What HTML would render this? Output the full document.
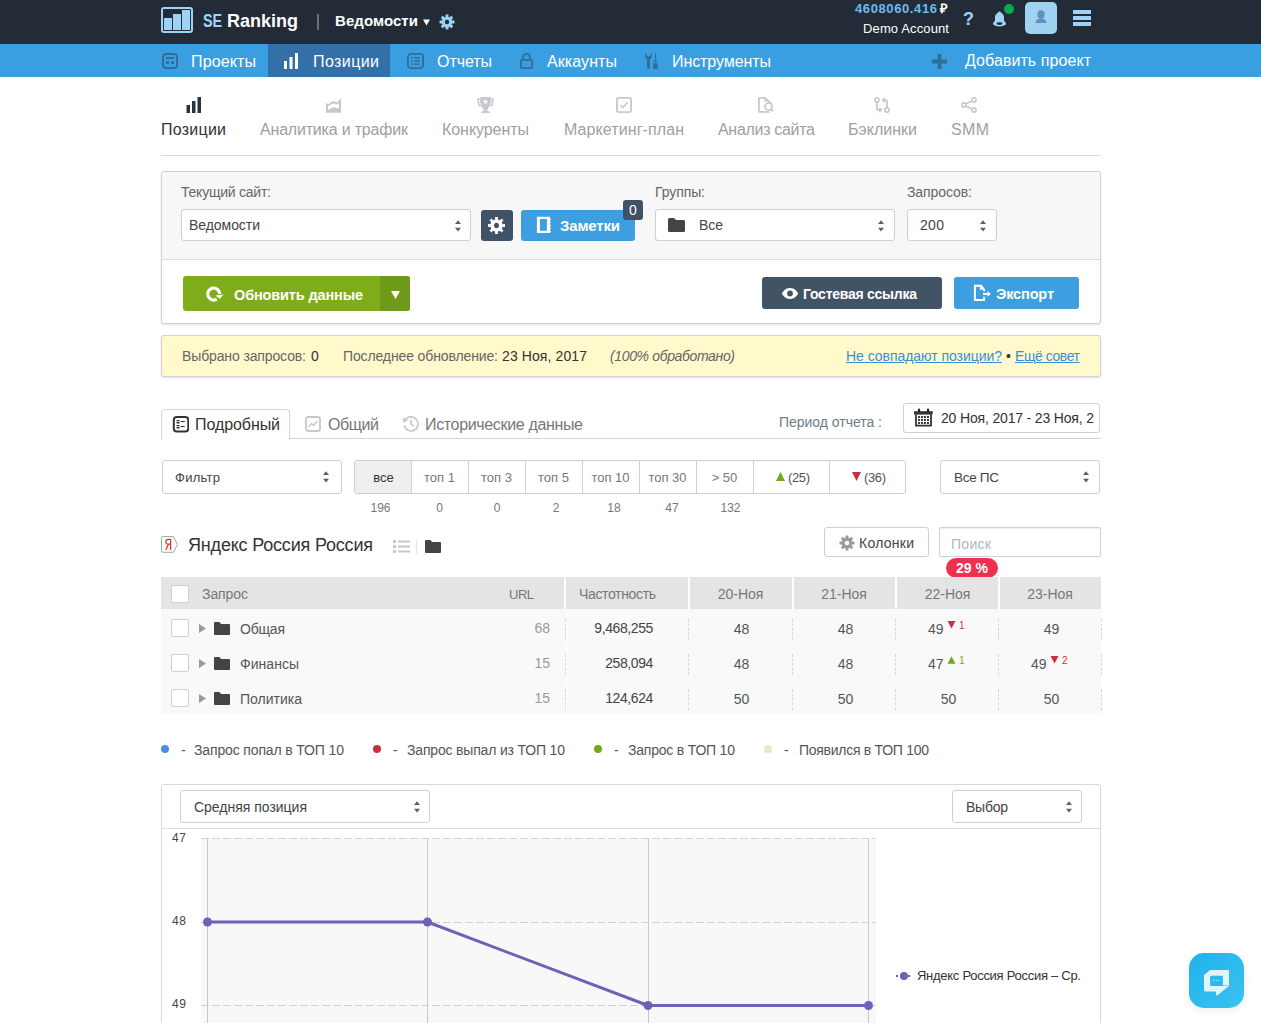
<!DOCTYPE html>
<html><head><meta charset="utf-8"><title>SE Ranking</title><style>
*{margin:0;padding:0;box-sizing:border-box}
html,body{width:1261px;height:1023px;overflow:hidden;background:#fff;position:relative}
body{font-family:"Liberation Sans", sans-serif}
.t{position:absolute;white-space:nowrap;line-height:1}
svg{display:block}
</style></head>
<body>
<div style="position:absolute;left:0px;top:0px;width:1261px;height:44px;background:#232b36"></div>
<div style="position:absolute;left:0px;top:44px;width:1261px;height:33px;background:#3a9fe0"></div>
<div style="position:absolute;left:268px;top:44px;width:122px;height:33px;background:#3370a8"></div>
<div style="position:absolute;left:161px;top:7px;width:32px;height:26px;border:2.5px solid #9fd3f6;border-radius:3px;box-sizing:border-box"></div>
<div style="position:absolute;left:164px;top:18px;width:8px;height:12px;background:#9fd3f6"></div>
<div style="position:absolute;left:173px;top:14px;width:8px;height:16px;background:#9fd3f6"></div>
<div style="position:absolute;left:182px;top:10px;width:8px;height:20px;background:#9fd3f6"></div>
<div style="position:absolute;left:317px;top:14px;width:2px;height:16px;background:#6b7079"></div>
<svg style="position:absolute;left:423px;top:18.5px" width="7" height="7" viewBox="0 0 7 7"><path d="M0 0.5H7L3.5 6.5z" fill="#fff"/></svg>
<svg style="position:absolute;left:439px;top:14px" width="16" height="16" viewBox="0 0 16 16"><g fill="#9fd3f6"><circle cx="8" cy="8" r="5.2"/><rect x="6.5" y="0.5" width="3" height="15" rx="0.5"/><rect x="6.5" y="0.5" width="3" height="15" rx="0.5" transform="rotate(45 8 8)"/><rect x="6.5" y="0.5" width="3" height="15" rx="0.5" transform="rotate(90 8 8)"/><rect x="6.5" y="0.5" width="3" height="15" rx="0.5" transform="rotate(135 8 8)"/></g><circle cx="8" cy="8" r="2.2" fill="#232b36"/></svg>
<svg style="position:absolute;left:992px;top:11px" width="15" height="16" viewBox="0 0 15 16"><path d="M7.5 0.5c-1 0-1.6 0.8-1.8 1.5C3.8 2.8 3 4.5 3 6.5v3L1.5 11.5h12L12 9.5v-3c0-2-0.8-3.7-2.7-4.5C9.1 1.3 8.5 0.5 7.5 0.5z" fill="#9fd3f6"/><ellipse cx="7.5" cy="12.5" rx="6.5" ry="3" fill="#9fd3f6"/><ellipse cx="7.5" cy="12.6" rx="3" ry="1.3" fill="#232b36"/></svg>
<div style="position:absolute;left:1004px;top:4px;width:10px;height:10px;background:#0aa84f;border-radius:50%"></div>
<div style="position:absolute;left:1025px;top:2px;width:32px;height:32px;background:#a0d2f2;border-radius:5px"></div>
<svg style="position:absolute;left:1035px;top:10px" width="12" height="13" viewBox="0 0 12 13"><ellipse cx="6" cy="4.5" rx="3.6" ry="4.2" fill="#5a93bf"/><path d="M0.5 13c0-2.8 2.2-4.6 5.5-4.6s5.5 1.8 5.5 4.6z" fill="#5a93bf"/></svg>
<div style="position:absolute;left:1073px;top:10px;width:18px;height:4px;background:#9fd3f6"></div>
<div style="position:absolute;left:1073px;top:16px;width:18px;height:4px;background:#9fd3f6"></div>
<div style="position:absolute;left:1073px;top:22px;width:18px;height:4px;background:#9fd3f6"></div>
<svg style="position:absolute;left:162px;top:53px" width="16" height="16" viewBox="0 0 16 16"><rect x="1" y="1" width="14" height="14" rx="3" fill="none" stroke="#2f6e99" stroke-width="2"/><rect x="4" y="4" width="8" height="2" fill="#2f6e99"/><rect x="4" y="8" width="3" height="3" fill="#2f6e99"/><rect x="9" y="8" width="3" height="3" fill="#2f6e99"/></svg>
<svg style="position:absolute;left:283px;top:53px" width="16" height="16" viewBox="0 0 16 16"><rect x="1" y="8" width="3" height="8" fill="#fff"/><rect x="6.5" y="4" width="3" height="12" fill="#fff"/><rect x="12" y="0" width="3" height="16" fill="#fff"/></svg>
<svg style="position:absolute;left:407px;top:53px" width="17" height="16" viewBox="0 0 17 16"><rect x="0.9" y="0.9" width="15.2" height="14.2" rx="3" fill="none" stroke="#2f6e99" stroke-width="1.8"/><g fill="#2f6e99"><rect x="4.2" y="4.2" width="1.7" height="1.5"/><rect x="7.2" y="4.2" width="5.6" height="1.5"/><rect x="4.2" y="7.2" width="1.7" height="1.5"/><rect x="7.2" y="7.2" width="5.6" height="1.5"/><rect x="4.2" y="10.3" width="1.7" height="1.5"/><rect x="7.2" y="10.3" width="5.6" height="1.5"/></g></svg>
<svg style="position:absolute;left:520px;top:53px" width="13" height="16" viewBox="0 0 13 16"><path d="M3,6.5 V4.4 A3.5,3.5 0 0 1 10,4.4 V6.5" fill="none" stroke="#2f6e99" stroke-width="1.8"/><rect x="0.9" y="6.9" width="11.2" height="8.2" rx="1" fill="none" stroke="#2f6e99" stroke-width="1.8"/></svg>
<svg style="position:absolute;left:645px;top:53px" width="13" height="16" viewBox="0 0 13 16"><path d="M0,0.5 L1.3,0 V2.5 Q2.2,3.5 3.5,3.5 Q4.8,3.5 5.7,2.5 V0 L7,0.5 V3 Q7,5.5 4.9,6.5 V15 Q4.9,16 3.5,16 Q2.1,16 2.1,15 V6.5 Q0,5.5 0,3 Z" fill="#2f6e99"/><rect x="10" y="0" width="1.1" height="8.2" fill="#2f6e99"/><rect x="8" y="8" width="4.8" height="1" fill="#2f6e99"/><path d="M8.7,10.1 H12.1 L12.8,14.5 Q12.8,16 11.5,16 H9.3 Q8,16 8,14.5 Z" fill="#2f6e99"/></svg>
<svg style="position:absolute;left:932px;top:54px" width="15" height="15" viewBox="0 0 15 15"><rect x="5.5" y="0" width="4" height="15" fill="#2f6e99"/><rect x="0" y="5.5" width="15" height="4" fill="#2f6e99"/></svg>
<svg style="position:absolute;left:186px;top:97px" width="16" height="16" viewBox="0 0 16 16"><rect x="0.5" y="8" width="3.5" height="8" fill="#263240"/><rect x="6" y="4" width="3.5" height="12" fill="#263240"/><rect x="11.5" y="0" width="3.5" height="16" fill="#263240"/></svg>
<svg style="position:absolute;left:326px;top:98px" width="15" height="15" viewBox="0 0 15 15"><path d="M0,5.2 L2.5,6 L6.5,3 L11,4.5 L15,0 V14.8 H0 Z" fill="#c5c9cc"/><path d="M2,8 L7,5.5 L11.5,6.5 L13,4.5 V10 L11.5,10.5 L7.5,9 L2,12 Z" fill="#fff"/></svg>
<svg style="position:absolute;left:477px;top:97px" width="17" height="16" viewBox="0 0 17 16"><path d="M3.2,0 H13.9 V5.5 L10,13.8 H7 L3.2,5.5 Z" fill="#c5c9cc"/><path d="M3.8,16 Q4.3,13.8 8.5,13.5 Q12.7,13.8 13.2,16 Z" fill="#c5c9cc"/><path d="M3.4,2.2 H0.8 L2.1,8.5 H5 M13.7,2.2 H16.2 L14.9,8.5 H12" fill="none" stroke="#c5c9cc" stroke-width="1.5"/><path d="M8.5,2 L9.3,3.7 L11.1,3.9 L9.8,5.1 L10.1,6.9 L8.5,6 L6.9,6.9 L7.2,5.1 L5.9,3.9 L7.7,3.7 Z" fill="#fff"/></svg>
<svg style="position:absolute;left:616px;top:97px" width="16" height="16" viewBox="0 0 16 16"><rect x="0.9" y="0.9" width="14.2" height="14.2" rx="1.5" fill="none" stroke="#c5c9cc" stroke-width="1.8"/><path d="M4.2,8.2 L6.9,10.5 L11.6,5.4" fill="none" stroke="#c5c9cc" stroke-width="1.6"/></svg>
<svg style="position:absolute;left:758px;top:97px" width="16" height="16" viewBox="0 0 16 16"><path d="M6.5,14.9 H1.5 Q0.9,14.9 0.9,14.3 V1.5 Q0.9,0.9 1.5,0.9 H7 L13.6,6.8" fill="none" stroke="#c5c9cc" stroke-width="1.8"/><path d="M6.3,0.9 V4.6 H10.2 Z" fill="#c5c9cc"/><path d="M11.5,15 H6.5" stroke="#c5c9cc" stroke-width="1.8"/><circle cx="10.5" cy="9.5" r="3.5" fill="#fff" stroke="#c5c9cc" stroke-width="1.7"/><path d="M12.8,12 L15,14.2" stroke="#c5c9cc" stroke-width="2"/></svg>
<svg style="position:absolute;left:874px;top:97px" width="16" height="16" viewBox="0 0 16 16"><circle cx="2.9" cy="2.9" r="2.1" fill="none" stroke="#c5c9cc" stroke-width="1.6"/><circle cx="13" cy="13" r="2.1" fill="none" stroke="#c5c9cc" stroke-width="1.6"/><path d="M2.9,5 V11.5 Q2.9,12.8 4.2,12.8 H6.5 M13,11 V4.5 Q13,3.2 11.7,3.2 H9.5" fill="none" stroke="#c5c9cc" stroke-width="1.8"/><path d="M5.2,10 L8.8,12.8 L5.2,15.8 Z M10.8,0.1 L7.2,3.1 L10.8,6 Z" fill="#c5c9cc"/></svg>
<svg style="position:absolute;left:961px;top:97px" width="16" height="16" viewBox="0 0 16 16"><circle cx="13" cy="2.9" r="2.1" fill="none" stroke="#c5c9cc" stroke-width="1.6"/><circle cx="2.9" cy="8" r="2.1" fill="none" stroke="#c5c9cc" stroke-width="1.6"/><circle cx="13" cy="13" r="2.1" fill="none" stroke="#c5c9cc" stroke-width="1.6"/><path d="M4.8,7 L11.1,3.9 M4.8,9 L11.1,12.1" stroke="#c5c9cc" stroke-width="1.5"/></svg>
<div style="position:absolute;left:161px;top:155px;width:940px;height:1px;background:#d8d8d8"></div>
<div style="position:absolute;left:161px;top:171px;width:940px;height:153px;border:1px solid #d0d0d0;border-radius:3px;background:#fff;box-shadow:0 1px 2px rgba(0,0,0,0.12)"></div>
<div style="position:absolute;left:162px;top:172px;width:938px;height:88px;background:#f7f7f7;border-bottom:1px solid #dcdcdc;border-radius:3px 3px 0 0"></div>
<div style="position:absolute;left:181px;top:209px;width:290px;height:32px;background:#fff;border:1px solid #cfcfcf;border-radius:3px"></div>
<svg style="position:absolute;left:455px;top:220px" width="7" height="12" viewBox="0 0 7 12"><path d="M0,4 L3,0.3 L6,4z M0,7.8 H6 L3,11.5z" fill="#606060"/></svg>
<div style="position:absolute;left:481px;top:210px;width:32px;height:31px;background:#425266;border-radius:3px"></div>
<svg style="position:absolute;left:488px;top:216.5px" width="17" height="17" viewBox="0 0 17 17"><g fill="#fff"><circle cx="8.5" cy="8.5" r="6.2"/><path d="M7,0 H10 L9.7,3 H7.3z M7,17 H10 L9.7,14 H7.3z M0,7 V10 L3,9.7 V7.3z M17,7 V10 L14,9.7 V7.3z"/><path d="M7,0 H10 L9.7,3 H7.3z M7,17 H10 L9.7,14 H7.3z M0,7 V10 L3,9.7 V7.3z M17,7 V10 L14,9.7 V7.3z" transform="rotate(45 8.5 8.5)"/></g><ellipse cx="8.5" cy="8.5" rx="2.4" ry="2.8" fill="#425266"/></svg>
<div style="position:absolute;left:521px;top:210px;width:114px;height:31px;background:#3d9fe0;border-radius:3px"></div>
<svg style="position:absolute;left:536px;top:216px" width="16" height="18" viewBox="0 0 16 18"><path d="M0.9,0.8 H14.1 V16.9 H0.9 Z M3.9,3.1 V14.8 H10.9 V3.1 Z" fill="#fff" fill-rule="evenodd"/><path d="M14,2.6 L15.3,3.4 L14,4.2Z M14,5.7 L15.3,6.5 L14,7.3Z M14,8.7 L15.3,9.5 L14,10.3Z M14,11.7 L15.3,12.5 L14,13.3Z M14,14.8 L15.3,15.6 L14,16.4Z" fill="#fff"/></svg>
<div style="position:absolute;left:623px;top:200px;width:20px;height:20px;background:#425266;border-radius:3px"></div>
<div style="position:absolute;left:655px;top:209px;width:240px;height:32px;background:#fff;border:1px solid #cfcfcf;border-radius:3px"></div>
<svg style="position:absolute;left:668px;top:218px" width="17" height="14" viewBox="0 0 17 14"><path d="M0 1.5Q0 0 1.5 0H6l2 2h7.5Q17 2 17 3.5v9Q17 14 15.5 14h-14Q0 14 0 12.5z" fill="#444"/></svg>
<svg style="position:absolute;left:878px;top:220px" width="7" height="12" viewBox="0 0 7 12"><path d="M0,4 L3,0.3 L6,4z M0,7.8 H6 L3,11.5z" fill="#606060"/></svg>
<div style="position:absolute;left:907px;top:209px;width:90px;height:32px;background:#fff;border:1px solid #cfcfcf;border-radius:3px"></div>
<svg style="position:absolute;left:980px;top:220px" width="7" height="12" viewBox="0 0 7 12"><path d="M0,4 L3,0.3 L6,4z M0,7.8 H6 L3,11.5z" fill="#606060"/></svg>
<div style="position:absolute;left:183px;top:276px;width:227px;height:35px;background:#7fad19;border-radius:3px"></div>
<div style="position:absolute;left:380px;top:276px;width:30px;height:35px;background:#6e9a1c;border-radius:0 3px 3px 0"></div>
<svg style="position:absolute;left:205px;top:285px" width="20" height="18" viewBox="0 0 20 18"><path d="M14.7,9 A6,6 0 1 0 11.7,14.2" fill="none" stroke="#fff" stroke-width="3.2"/><path d="M10.3,10.5 L18.7,9.5 L14.8,13.8 Z" fill="#fff"/></svg>
<svg style="position:absolute;left:391px;top:291px" width="9" height="8" viewBox="0 0 9 8"><path d="M0 0H9L4.5 8z" fill="#fff"/></svg>
<div style="position:absolute;left:762px;top:277px;width:180px;height:32px;background:#435366;border-radius:3px"></div>
<svg style="position:absolute;left:781px;top:287px" width="18" height="13" viewBox="0 0 18 13"><path d="M0.8,6.4 C3,2.5 5.8,0.9 9,0.9 C12.2,0.9 15,2.5 17.2,6.4 C15,10.3 12.2,11.9 9,11.9 C5.8,11.9 3,10.3 0.8,6.4 Z" fill="#fff"/><circle cx="9" cy="6.4" r="2.9" fill="#435366"/></svg>
<div style="position:absolute;left:954px;top:277px;width:125px;height:32px;background:#3d9fe0;border-radius:3px"></div>
<svg style="position:absolute;left:973px;top:284px" width="19" height="18" viewBox="0 0 19 18"><path d="M11.1,7.2 V5.5 L8,1.8 H1.9 V15.9 H11.1 V12.8" fill="none" stroke="#fff" stroke-width="2"/><path d="M6.9,1.8 V5.8 H11.1 Z" fill="#fff"/><rect x="10" y="9" width="4.5" height="2" fill="#fff"/><path d="M14.3,7 L17.9,9.9 L14.3,12.8 Z" fill="#fff"/></svg>
<div style="position:absolute;left:161px;top:335px;width:940px;height:42px;background:#fff9cc;border:1px solid #d2d2d2;border-radius:3px;box-shadow:0 1px 2px rgba(0,0,0,0.12)"></div>
<div style="position:absolute;left:161px;top:409px;width:129px;height:31px;border:1px solid #d5d5d5;border-bottom:none;border-radius:4px 4px 0 0;background:#fff"></div>
<div style="position:absolute;left:161px;top:438px;width:940px;height:1px;background:#d5d5d5"></div>
<div style="position:absolute;left:162px;top:438px;width:127px;height:1px;background:#fff"></div>
<svg style="position:absolute;left:172px;top:416px" width="17" height="17" viewBox="0 0 17 17"><rect x="1.8" y="1" width="14.5" height="14.5" rx="3" fill="none" stroke="#333" stroke-width="2"/><g fill="#333"><rect x="4.4" y="4" width="3.3" height="1.3" rx="0.6"/><rect x="4.4" y="6.1" width="3.3" height="1.3" rx="0.6"/><rect x="4.4" y="9" width="3.3" height="1.3" rx="0.6"/><rect x="4.4" y="11.1" width="3.3" height="1.3" rx="0.6"/><rect x="8.7" y="5" width="4" height="1.1"/><rect x="8.7" y="10" width="4" height="1.1"/></g></svg>
<svg style="position:absolute;left:305px;top:416px" width="16" height="16" viewBox="0 0 16 16"><rect x="1" y="1" width="14" height="14" rx="2" fill="none" stroke="#c8c8c8" stroke-width="1.8"/><path d="M3.5 11l3-3.5 2 2 4-4.5" fill="none" stroke="#c8c8c8" stroke-width="1.3"/></svg>
<svg style="position:absolute;left:403px;top:416px" width="17" height="17" viewBox="0 0 17 17"><path d="M2.19,4 A7,7 0 1 1 1.19,9.5" fill="none" stroke="#c8c8c8" stroke-width="1.8"/><path d="M0.1,1.6 L0.1,6.7 L4.9,4.4 Z" fill="#c8c8c8"/><path d="M8,3.9 V7.7 L10.8,10.5" fill="none" stroke="#c8c8c8" stroke-width="1.6"/></svg>
<div style="position:absolute;left:903px;top:403px;width:197px;height:30px;border:1px solid #d0d0d0;border-radius:3px;background:#fff"></div>
<svg style="position:absolute;left:914px;top:408px" width="19" height="19" viewBox="0 0 19 19"><rect x="0" y="3.2" width="18.7" height="3.4" fill="#333"/><rect x="4" y="0.7" width="2.1" height="3.3" fill="#222"/><rect x="13" y="0.7" width="2.1" height="3.3" fill="#222"/><path d="M2,6.5 V17.7 H17 V6.5" fill="none" stroke="#333" stroke-width="1.8"/><g fill="#111"><rect x="4.1" y="8.1" width="1.8" height="1.8"/><rect x="7.1" y="8.1" width="1.8" height="1.8"/><rect x="10" y="8.1" width="1.8" height="1.8"/><rect x="13.1" y="8.1" width="1.8" height="1.8"/><rect x="4.1" y="11" width="1.8" height="1.8"/><rect x="7.1" y="11" width="1.8" height="1.8"/><rect x="10" y="11" width="1.8" height="1.8"/><rect x="13.1" y="11" width="1.8" height="1.8"/><rect x="4.1" y="14.1" width="1.8" height="1.8"/><rect x="7.1" y="14.1" width="1.8" height="1.8"/><rect x="10" y="14.1" width="1.8" height="1.8"/><rect x="13.1" y="14.1" width="1.8" height="1.8"/></g></svg>
<div style="position:absolute;left:162px;top:460px;width:180px;height:34px;border:1px solid #cfcfcf;border-radius:3px;background:#fff"></div>
<svg style="position:absolute;left:323px;top:471px" width="7" height="12" viewBox="0 0 7 12"><path d="M0,4 L3,0.3 L6,4z M0,7.8 H6 L3,11.5z" fill="#606060"/></svg>
<div style="position:absolute;left:354px;top:460px;width:552px;height:34px;border:1px solid #cfcfcf;border-radius:3px;background:#fff"></div>
<div style="position:absolute;left:355px;top:461px;width:57px;height:32px;background:#efefef;border-radius:2px 0 0 2px"></div>
<div style="position:absolute;left:411px;top:461px;width:1px;height:32px;background:#d0d0d0"></div>
<div style="position:absolute;left:468px;top:461px;width:1px;height:32px;background:#d0d0d0"></div>
<div style="position:absolute;left:525px;top:461px;width:1px;height:32px;background:#d0d0d0"></div>
<div style="position:absolute;left:582px;top:461px;width:1px;height:32px;background:#d0d0d0"></div>
<div style="position:absolute;left:639px;top:461px;width:1px;height:32px;background:#d0d0d0"></div>
<div style="position:absolute;left:696px;top:461px;width:1px;height:32px;background:#d0d0d0"></div>
<div style="position:absolute;left:753px;top:461px;width:1px;height:32px;background:#d0d0d0"></div>
<div style="position:absolute;left:829px;top:461px;width:1px;height:32px;background:#d0d0d0"></div>
<div style="position:absolute;left:353.5px;top:468px;width:60px;text-align:center;font-size:13px;line-height:20px;color:#333;white-space:nowrap">все</div>
<div style="position:absolute;left:409.5px;top:468px;width:60px;text-align:center;font-size:13px;line-height:20px;color:#777;white-space:nowrap">топ 1</div>
<div style="position:absolute;left:466.5px;top:468px;width:60px;text-align:center;font-size:13px;line-height:20px;color:#777;white-space:nowrap">топ 3</div>
<div style="position:absolute;left:523.5px;top:468px;width:60px;text-align:center;font-size:13px;line-height:20px;color:#777;white-space:nowrap">топ 5</div>
<div style="position:absolute;left:580.5px;top:468px;width:60px;text-align:center;font-size:13px;line-height:20px;color:#777;white-space:nowrap">топ 10</div>
<div style="position:absolute;left:637.5px;top:468px;width:60px;text-align:center;font-size:13px;line-height:20px;color:#777;white-space:nowrap">топ 30</div>
<div style="position:absolute;left:694.5px;top:468px;width:60px;text-align:center;font-size:13px;line-height:20px;color:#777;white-space:nowrap">> 50</div>
<svg style="position:absolute;left:776px;top:472px" width="9" height="9" viewBox="0 0 9 9"><path d="M4.5 0L9 9H0z" fill="#73a81c"/></svg>
<svg style="position:absolute;left:852px;top:472px" width="9" height="9" viewBox="0 0 9 9"><path d="M0 0H9L4.5 9z" fill="#c9303e"/></svg>
<div style="position:absolute;left:350.5px;top:500px;width:60px;text-align:center;font-size:12px;line-height:16px;color:#777;white-space:nowrap">196</div>
<div style="position:absolute;left:409.5px;top:500px;width:60px;text-align:center;font-size:12px;line-height:16px;color:#777;white-space:nowrap">0</div>
<div style="position:absolute;left:467px;top:500px;width:60px;text-align:center;font-size:12px;line-height:16px;color:#777;white-space:nowrap">0</div>
<div style="position:absolute;left:526px;top:500px;width:60px;text-align:center;font-size:12px;line-height:16px;color:#777;white-space:nowrap">2</div>
<div style="position:absolute;left:584px;top:500px;width:60px;text-align:center;font-size:12px;line-height:16px;color:#777;white-space:nowrap">18</div>
<div style="position:absolute;left:642px;top:500px;width:60px;text-align:center;font-size:12px;line-height:16px;color:#777;white-space:nowrap">47</div>
<div style="position:absolute;left:700.5px;top:500px;width:60px;text-align:center;font-size:12px;line-height:16px;color:#777;white-space:nowrap">132</div>
<div style="position:absolute;left:940px;top:460px;width:160px;height:34px;border:1px solid #cfcfcf;border-radius:3px;background:#fff"></div>
<svg style="position:absolute;left:1083px;top:471px" width="7" height="12" viewBox="0 0 7 12"><path d="M0,4 L3,0.3 L6,4z M0,7.8 H6 L3,11.5z" fill="#606060"/></svg>
<svg style="position:absolute;left:161px;top:536px" width="18" height="17" viewBox="0 0 18 17"><path d="M2,0.5 H12.3 L16.5,8.4 L12.3,16.3 H2 Q0.5,16.3 0.5,14.8 V2 Q0.5,0.5 2,0.5 Z" fill="#fff" stroke="#a8a8a8" stroke-width="1"/><path d="M9.6,2.8 V13.9 M9.6,3.3 H7.4 Q4.8,3.3 4.8,5.8 Q4.8,8.2 7.4,8.2 H9.6 M7.4,8.2 L4.8,13.9" fill="none" stroke="#e0301e" stroke-width="1.2"/></svg>
<svg style="position:absolute;left:393px;top:540px" width="17" height="13" viewBox="0 0 17 13"><g fill="#c8c8c8"><rect x="0" y="0" width="3" height="3"/><rect x="5" y="0.5" width="12" height="2"/><rect x="0" y="5" width="3" height="3"/><rect x="5" y="5.5" width="12" height="2"/><rect x="0" y="10" width="3" height="3"/><rect x="5" y="10.5" width="12" height="2"/></g></svg>
<div style="position:absolute;left:416px;top:540px;width:1px;height:14px;background:#e5e5e5"></div>
<svg style="position:absolute;left:425px;top:540px" width="16" height="13" viewBox="0 0 16 13"><path d="M0 1Q0 0 1 0H5.5l1.5 2h8Q16 2 16 3v9Q16 13 15 13H1Q0 13 0 12z" fill="#444"/></svg>
<div style="position:absolute;left:824px;top:527px;width:105px;height:30px;border:1px solid #cfcfcf;border-radius:3px;background:#fff"></div>
<svg style="position:absolute;left:839px;top:535px" width="16" height="16" viewBox="0 0 16 16"><g fill="#999"><circle cx="8" cy="8" r="5.2"/><rect x="6.5" y="0.5" width="3" height="15" rx="0.5"/><rect x="6.5" y="0.5" width="3" height="15" rx="0.5" transform="rotate(45 8 8)"/><rect x="6.5" y="0.5" width="3" height="15" rx="0.5" transform="rotate(90 8 8)"/><rect x="6.5" y="0.5" width="3" height="15" rx="0.5" transform="rotate(135 8 8)"/></g><circle cx="8" cy="8" r="2.3" fill="#fff"/></svg>
<div style="position:absolute;left:939px;top:527px;width:162px;height:30px;border:1px solid #cfcfcf;border-radius:2px;background:#fff;box-shadow:inset 0 1px 1px rgba(0,0,0,0.06)"></div>
<div style="position:absolute;left:946px;top:558px;width:52px;height:20px;background:#f0304e;border-radius:10px"></div>
<div style="position:absolute;left:161px;top:577px;width:940px;height:32px;background:#e4e4e4"></div>
<div style="position:absolute;left:564px;top:577px;width:2px;height:32px;background:#fff"></div>
<div style="position:absolute;left:688px;top:577px;width:2px;height:32px;background:#fff"></div>
<div style="position:absolute;left:792px;top:577px;width:2px;height:32px;background:#fff"></div>
<div style="position:absolute;left:895px;top:577px;width:2px;height:32px;background:#fff"></div>
<div style="position:absolute;left:998px;top:577px;width:2px;height:32px;background:#fff"></div>
<div style="position:absolute;left:161px;top:609px;width:940px;height:105px;background:#f9f9f9"></div>
<div style="position:absolute;left:566px;top:609px;width:1px;height:105px;background:#fff"></div>
<div style="position:absolute;left:171px;top:585px;width:18px;height:18px;background:#fff;border:1px solid #d0d0d0;border-radius:2px"></div>
<div style="position:absolute;left:700.5px;top:586px;width:80px;text-align:center;font-size:14px;line-height:16px;color:#777;white-space:nowrap">20-Ноя</div>
<div style="position:absolute;left:804px;top:586px;width:80px;text-align:center;font-size:14px;line-height:16px;color:#777;white-space:nowrap">21-Ноя</div>
<div style="position:absolute;left:907.5px;top:586px;width:80px;text-align:center;font-size:14px;line-height:16px;color:#777;white-space:nowrap">22-Ноя</div>
<div style="position:absolute;left:1010px;top:586px;width:80px;text-align:center;font-size:14px;line-height:16px;color:#777;white-space:nowrap">23-Ноя</div>
<div style="position:absolute;left:171px;top:619px;width:18px;height:18px;background:#fff;border:1px solid #d0d0d0;border-radius:2px"></div>
<svg style="position:absolute;left:199px;top:624px" width="7" height="9" viewBox="0 0 7 9"><path d="M0 0L7 4.5 0 9z" fill="#999"/></svg>
<svg style="position:absolute;left:214px;top:622px" width="16" height="13" viewBox="0 0 16 13"><path d="M0 1Q0 0 1 0H5.5l1.5 2h8Q16 2 16 3v9Q16 13 15 13H1Q0 13 0 12z" fill="#444"/></svg>
<div style="position:absolute;left:500px;top:620px;width:50px;text-align:right;font-size:14px;line-height:16px;color:#999">68</div>
<div style="position:absolute;left:560px;top:620px;width:93px;text-align:right;font-size:14px;line-height:16px;color:#444;letter-spacing:-0.4px">9,468,255</div>
<div style="position:absolute;left:565px;top:619px;width:0;height:21px;border-left:1px dashed #d8d8d8"></div>
<div style="position:absolute;left:688px;top:619px;width:0;height:21px;border-left:1px dashed #d8d8d8"></div>
<div style="position:absolute;left:792px;top:619px;width:0;height:21px;border-left:1px dashed #d8d8d8"></div>
<div style="position:absolute;left:895px;top:619px;width:0;height:21px;border-left:1px dashed #d8d8d8"></div>
<div style="position:absolute;left:998px;top:619px;width:0;height:21px;border-left:1px dashed #d8d8d8"></div>
<div style="position:absolute;left:1101px;top:619px;width:0;height:21px;border-left:1px dashed #d8d8d8"></div>
<div class="v" style="position:absolute;left:711.5px;top:621px;width:60px;text-align:center;font-size:14px;line-height:16px;color:#555">48</div>
<div class="v" style="position:absolute;left:815.5px;top:621px;width:60px;text-align:center;font-size:14px;line-height:16px;color:#555">48</div>
<div class="v" style="position:absolute;left:918.5px;top:621px;width:60px;text-align:center;font-size:14px;line-height:16px;color:#555"></div>
<div class="v" style="position:absolute;left:1021.5px;top:621px;width:60px;text-align:center;font-size:14px;line-height:16px;color:#555">49</div>
<div style="position:absolute;left:171px;top:654px;width:18px;height:18px;background:#fff;border:1px solid #d0d0d0;border-radius:2px"></div>
<svg style="position:absolute;left:199px;top:659px" width="7" height="9" viewBox="0 0 7 9"><path d="M0 0L7 4.5 0 9z" fill="#999"/></svg>
<svg style="position:absolute;left:214px;top:657px" width="16" height="13" viewBox="0 0 16 13"><path d="M0 1Q0 0 1 0H5.5l1.5 2h8Q16 2 16 3v9Q16 13 15 13H1Q0 13 0 12z" fill="#444"/></svg>
<div style="position:absolute;left:500px;top:655px;width:50px;text-align:right;font-size:14px;line-height:16px;color:#999">15</div>
<div style="position:absolute;left:560px;top:655px;width:93px;text-align:right;font-size:14px;line-height:16px;color:#444;letter-spacing:-0.4px">258,094</div>
<div style="position:absolute;left:565px;top:654px;width:0;height:21px;border-left:1px dashed #d8d8d8"></div>
<div style="position:absolute;left:688px;top:654px;width:0;height:21px;border-left:1px dashed #d8d8d8"></div>
<div style="position:absolute;left:792px;top:654px;width:0;height:21px;border-left:1px dashed #d8d8d8"></div>
<div style="position:absolute;left:895px;top:654px;width:0;height:21px;border-left:1px dashed #d8d8d8"></div>
<div style="position:absolute;left:998px;top:654px;width:0;height:21px;border-left:1px dashed #d8d8d8"></div>
<div style="position:absolute;left:1101px;top:654px;width:0;height:21px;border-left:1px dashed #d8d8d8"></div>
<div class="v" style="position:absolute;left:711.5px;top:656px;width:60px;text-align:center;font-size:14px;line-height:16px;color:#555">48</div>
<div class="v" style="position:absolute;left:815.5px;top:656px;width:60px;text-align:center;font-size:14px;line-height:16px;color:#555">48</div>
<div class="v" style="position:absolute;left:918.5px;top:656px;width:60px;text-align:center;font-size:14px;line-height:16px;color:#555"></div>
<div class="v" style="position:absolute;left:1021.5px;top:656px;width:60px;text-align:center;font-size:14px;line-height:16px;color:#555"></div>
<div style="position:absolute;left:171px;top:689px;width:18px;height:18px;background:#fff;border:1px solid #d0d0d0;border-radius:2px"></div>
<svg style="position:absolute;left:199px;top:694px" width="7" height="9" viewBox="0 0 7 9"><path d="M0 0L7 4.5 0 9z" fill="#999"/></svg>
<svg style="position:absolute;left:214px;top:692px" width="16" height="13" viewBox="0 0 16 13"><path d="M0 1Q0 0 1 0H5.5l1.5 2h8Q16 2 16 3v9Q16 13 15 13H1Q0 13 0 12z" fill="#444"/></svg>
<div style="position:absolute;left:500px;top:690px;width:50px;text-align:right;font-size:14px;line-height:16px;color:#999">15</div>
<div style="position:absolute;left:560px;top:690px;width:93px;text-align:right;font-size:14px;line-height:16px;color:#444;letter-spacing:-0.4px">124,624</div>
<div style="position:absolute;left:565px;top:689px;width:0;height:21px;border-left:1px dashed #d8d8d8"></div>
<div style="position:absolute;left:688px;top:689px;width:0;height:21px;border-left:1px dashed #d8d8d8"></div>
<div style="position:absolute;left:792px;top:689px;width:0;height:21px;border-left:1px dashed #d8d8d8"></div>
<div style="position:absolute;left:895px;top:689px;width:0;height:21px;border-left:1px dashed #d8d8d8"></div>
<div style="position:absolute;left:998px;top:689px;width:0;height:21px;border-left:1px dashed #d8d8d8"></div>
<div style="position:absolute;left:1101px;top:689px;width:0;height:21px;border-left:1px dashed #d8d8d8"></div>
<div class="v" style="position:absolute;left:711.5px;top:691px;width:60px;text-align:center;font-size:14px;line-height:16px;color:#555">50</div>
<div class="v" style="position:absolute;left:815.5px;top:691px;width:60px;text-align:center;font-size:14px;line-height:16px;color:#555">50</div>
<div class="v" style="position:absolute;left:918.5px;top:691px;width:60px;text-align:center;font-size:14px;line-height:16px;color:#555">50</div>
<div class="v" style="position:absolute;left:1021.5px;top:691px;width:60px;text-align:center;font-size:14px;line-height:16px;color:#555">50</div>
<div style="position:absolute;left:928px;top:621px;font-size:14px;line-height:16px;color:#555;white-space:nowrap">49</div>
<svg style="position:absolute;left:947px;top:621px" width="9" height="8" viewBox="0 0 9 8"><path d="M0.5 0H8.5L4.5 7.5z" fill="#c9303e"/></svg>
<div style="position:absolute;left:959px;top:620px;font-size:10px;line-height:11px;color:#c9303e;white-space:nowrap">1</div>
<div style="position:absolute;left:928px;top:656px;font-size:14px;line-height:16px;color:#555;white-space:nowrap">47</div>
<svg style="position:absolute;left:947px;top:656px" width="9" height="8" viewBox="0 0 9 8"><path d="M4.5 0.3L8.5 7.8H0.5z" fill="#73a81c"/></svg>
<div style="position:absolute;left:959px;top:655px;font-size:10px;line-height:11px;color:#73a81c;white-space:nowrap">1</div>
<div style="position:absolute;left:1031px;top:656px;font-size:14px;line-height:16px;color:#555;white-space:nowrap">49</div>
<svg style="position:absolute;left:1050px;top:656px" width="9" height="8" viewBox="0 0 9 8"><path d="M0.5 0H8.5L4.5 7.5z" fill="#c9303e"/></svg>
<div style="position:absolute;left:1062px;top:655px;font-size:10px;line-height:11px;color:#c9303e;white-space:nowrap">2</div>
<div style="position:absolute;left:161px;top:745px;width:8px;height:8px;background:#4a90e2;border-radius:50%"></div>
<div style="position:absolute;left:373px;top:745px;width:8px;height:8px;background:#c9303e;border-radius:50%"></div>
<div style="position:absolute;left:594px;top:745px;width:8px;height:8px;background:#73a81c;border-radius:50%"></div>
<div style="position:absolute;left:764px;top:745px;width:8px;height:8px;background:#ece4cc;border-radius:50%"></div>
<div style="position:absolute;left:161px;top:784px;width:940px;height:260px;border:1px solid #d8d8d8;border-radius:3px;background:#fff"></div>
<div style="position:absolute;left:162px;top:828px;width:938px;height:1px;background:#dcdcdc"></div>
<div style="position:absolute;left:180px;top:790px;width:250px;height:33px;border:1px solid #cfcfcf;border-radius:3px;background:#fff"></div>
<svg style="position:absolute;left:414px;top:801px" width="7" height="12" viewBox="0 0 7 12"><path d="M0,4 L3,0.3 L6,4z M0,7.8 H6 L3,11.5z" fill="#606060"/></svg>
<div style="position:absolute;left:952px;top:790px;width:130px;height:33px;border:1px solid #cfcfcf;border-radius:3px;background:#fff"></div>
<svg style="position:absolute;left:1066px;top:801px" width="7" height="12" viewBox="0 0 7 12"><path d="M0,4 L3,0.3 L6,4z M0,7.8 H6 L3,11.5z" fill="#606060"/></svg>
<svg style="position:absolute;left:0;top:0" width="1261" height="1023" viewBox="0 0 1261 1023"><rect x="201" y="838" width="675" height="200" fill="#f8f8f8"/><line x1="201" y1="838.5" x2="876" y2="838.5" stroke="#d2d2d2" stroke-width="1" stroke-dasharray="8,3"/><line x1="201" y1="922.5" x2="876" y2="922.5" stroke="#d2d2d2" stroke-width="1" stroke-dasharray="8,3"/><line x1="201" y1="1005.5" x2="876" y2="1005.5" stroke="#d2d2d2" stroke-width="1" stroke-dasharray="8,3"/><line x1="207.5" y1="838" x2="207.5" y2="1030" stroke="#c8c8c8" stroke-width="1"/><line x1="427.5" y1="838" x2="427.5" y2="1030" stroke="#c8c8c8" stroke-width="1"/><line x1="648.5" y1="838" x2="648.5" y2="1030" stroke="#c8c8c8" stroke-width="1"/><line x1="868.5" y1="838" x2="868.5" y2="1030" stroke="#c8c8c8" stroke-width="1"/><polyline points="207.5,922 427.5,922 648,1005.5 868.5,1005.5" fill="none" stroke="#6a63b8" stroke-width="3" stroke-linejoin="round"/><circle cx="207.5" cy="922" r="4.5" fill="#6a63b8"/><circle cx="427.5" cy="922" r="4.5" fill="#6a63b8"/><circle cx="648" cy="1005.5" r="4.5" fill="#6a63b8"/><circle cx="868.5" cy="1005.5" r="4.5" fill="#6a63b8"/><line x1="896" y1="976" x2="912" y2="976" stroke="#6a63b8" stroke-width="2" stroke-dasharray="2,2"/><circle cx="904" cy="976" r="4" fill="#6a63b8"/></svg>
<div style="position:absolute;left:1189px;top:953px;width:55px;height:55px;background:linear-gradient(135deg,#1db3ec,#3cc2ef);border-radius:15px;box-shadow:0 2px 8px rgba(0,0,0,0.08)"></div>
<svg style="position:absolute;left:1204px;top:969px" width="26" height="28" viewBox="0 0 26 28"><path d="M6.2,1 H24 Q25,1 25,2 V17 L12.6,27 L11.6,22.5 H1.5 Q0,22.5 0,21 V6 Z" fill="#e0f4fc"/><path d="M7.3,6.8 H17.6 Q18.8,6.8 18.8,8 V16.5 H25 L25,17 H7.3 Q6.1,17 6.1,15.8 V8 Q6.1,6.8 7.3,6.8 Z" fill="#2cb9ee"/><g fill="#e0f4fc"><rect x="9.1" y="10.8" width="1" height="1.2"/><rect x="11.8" y="10.8" width="1" height="1.2"/><rect x="14.5" y="10.8" width="1" height="1.2"/></g></svg>
<span class="t" id="t0" style="left:202.5px;top:11.76px;font-size:18px;color:#9fd3f6;font-weight:700;letter-spacing:0.000px;transform:scaleX(0.8);transform-origin:0 0">SE</span>
<span class="t" id="t1" style="left:227px;top:11.76px;font-size:18px;color:#fff;font-weight:700;letter-spacing:-0.002px;">Ranking</span>
<span class="t" id="t2" style="left:335px;top:13.30px;font-size:15px;color:#fff;font-weight:700;letter-spacing:0.070px;">Ведомости</span>
<span class="t" id="t3" style="left:855px;top:2.00px;font-size:13px;color:#6cbcf0;font-weight:700;letter-spacing:0.608px;">4608060.416</span>
<span class="t" id="t4" style="left:940px;top:2.00px;font-size:13px;color:#fff;font-weight:700;letter-spacing:0.000px;">₽</span>
<span class="t" id="t5" style="left:863px;top:22.00px;font-size:13px;color:#fff;font-weight:400;letter-spacing:0.131px;">Demo Account</span>
<span class="t" id="t6" style="left:963px;top:9.76px;font-size:18px;color:#9fd3f6;font-weight:700;letter-spacing:0.000px;">?</span>
<span class="t" id="t7" style="left:191px;top:54.46px;font-size:16px;color:#fff;font-weight:400;letter-spacing:0.132px;">Проекты</span>
<span class="t" id="t8" style="left:313px;top:54.46px;font-size:16px;color:#fff;font-weight:400;letter-spacing:0.409px;">Позиции</span>
<span class="t" id="t9" style="left:437px;top:54.46px;font-size:16px;color:#fff;font-weight:400;letter-spacing:-0.062px;">Отчеты</span>
<span class="t" id="t10" style="left:547px;top:54.46px;font-size:16px;color:#fff;font-weight:400;letter-spacing:0.084px;">Аккаунты</span>
<span class="t" id="t11" style="left:672px;top:54.46px;font-size:16px;color:#fff;font-weight:400;letter-spacing:-0.077px;">Инструменты</span>
<span class="t" id="t12" style="left:965px;top:53.46px;font-size:16px;color:#fff;font-weight:400;letter-spacing:0.069px;">Добавить проект</span>
<span class="t" id="t13" style="left:161px;top:121.96px;font-size:16px;color:#333;font-weight:400;letter-spacing:0.244px;">Позиции</span>
<span class="t" id="t14" style="left:260px;top:121.96px;font-size:16px;color:#a0a0a0;font-weight:400;letter-spacing:-0.191px;">Аналитика и трафик</span>
<span class="t" id="t15" style="left:442px;top:121.96px;font-size:16px;color:#a0a0a0;font-weight:400;letter-spacing:-0.058px;">Конкуренты</span>
<span class="t" id="t16" style="left:564px;top:121.96px;font-size:16px;color:#a0a0a0;font-weight:400;letter-spacing:0.088px;">Маркетинг-план</span>
<span class="t" id="t17" style="left:718px;top:121.96px;font-size:16px;color:#a0a0a0;font-weight:400;letter-spacing:-0.305px;">Анализ сайта</span>
<span class="t" id="t18" style="left:848px;top:121.96px;font-size:16px;color:#a0a0a0;font-weight:400;letter-spacing:0.014px;">Бэклинки</span>
<span class="t" id="t19" style="left:951px;top:121.96px;font-size:16px;color:#a0a0a0;font-weight:400;letter-spacing:0.329px;">SMM</span>
<span class="t" id="t20" style="left:181px;top:185.15px;font-size:14px;color:#666;font-weight:400;letter-spacing:-0.233px;">Текущий сайт:</span>
<span class="t" id="t21" style="left:189px;top:218.15px;font-size:14px;color:#444;font-weight:400;letter-spacing:-0.054px;">Ведомости</span>
<span class="t" id="t22" style="left:560px;top:218.30px;font-size:15px;color:#fff;font-weight:700;letter-spacing:-0.176px;">Заметки</span>
<span class="t" id="t23" style="left:629px;top:203.15px;font-size:14px;color:#fff;font-weight:400;letter-spacing:0.000px;">0</span>
<span class="t" id="t24" style="left:655px;top:185.15px;font-size:14px;color:#666;font-weight:400;letter-spacing:-0.091px;">Группы:</span>
<span class="t" id="t25" style="left:699px;top:218.15px;font-size:14px;color:#444;font-weight:400;letter-spacing:0.000px;">Все</span>
<span class="t" id="t26" style="left:907px;top:185.15px;font-size:14px;color:#666;font-weight:400;letter-spacing:-0.084px;">Запросов:</span>
<span class="t" id="t27" style="left:920px;top:218.15px;font-size:14px;color:#444;font-weight:400;letter-spacing:0.317px;">200</span>
<span class="t" id="t28" style="left:234px;top:287.73px;font-size:14.5px;color:#fff;font-weight:700;letter-spacing:-0.140px;">Обновить данные</span>
<span class="t" id="t29" style="left:803px;top:287.15px;font-size:14px;color:#fff;font-weight:700;letter-spacing:-0.252px;">Гостевая ссылка</span>
<span class="t" id="t30" style="left:996px;top:287.23px;font-size:14.5px;color:#fff;font-weight:700;letter-spacing:-0.140px;">Экспорт</span>
<span class="t" id="t31" style="left:182px;top:349.15px;font-size:14px;color:#666;font-weight:400;letter-spacing:-0.127px;">Выбрано запросов:</span>
<span class="t" id="t32" style="left:311px;top:349.15px;font-size:14px;color:#333;font-weight:400;letter-spacing:1.203px;">0</span>
<span class="t" id="t33" style="left:343px;top:349.15px;font-size:14px;color:#666;font-weight:400;letter-spacing:-0.125px;">Последнее обновление:</span>
<span class="t" id="t34" style="left:502px;top:349.15px;font-size:14px;color:#333;font-weight:400;letter-spacing:0.103px;">23 Ноя, 2017</span>
<span class="t" id="t35" style="left:610px;top:349.15px;font-size:14px;color:#666;font-weight:400;letter-spacing:-0.357px;font-style:italic">(100% обработано)</span>
<span class="t" id="t36" style="left:846px;top:349.15px;font-size:14px;color:#3a8fd4;font-weight:400;letter-spacing:-0.044px;text-decoration:underline">Не совпадают позиции?</span>
<span class="t" id="t37" style="left:1006px;top:349.15px;font-size:14px;color:#333;font-weight:400;letter-spacing:1.094px;">•</span>
<span class="t" id="t38" style="left:1015px;top:349.15px;font-size:14px;color:#3a8fd4;font-weight:400;letter-spacing:-0.438px;text-decoration:underline">Ещё совет</span>
<span class="t" id="t39" style="left:195px;top:417.46px;font-size:16px;color:#333;font-weight:400;letter-spacing:-0.078px;">Подробный</span>
<span class="t" id="t40" style="left:328px;top:417.46px;font-size:16px;color:#777;font-weight:400;letter-spacing:-0.413px;">Общий</span>
<span class="t" id="t41" style="left:425px;top:417.46px;font-size:16px;color:#777;font-weight:400;letter-spacing:-0.345px;">Исторические данные</span>
<span class="t" id="t42" style="left:779px;top:414.65px;font-size:14px;color:#6e7b88;font-weight:400;letter-spacing:-0.024px;">Период отчета :</span>
<span class="t" id="t43" style="left:941px;top:411.15px;font-size:14px;color:#333;font-weight:400;letter-spacing:-0.166px;">20 Ноя, 2017 - 23 Ноя, 2</span>
<span class="t" id="t44" style="left:175px;top:471.00px;font-size:13px;color:#444;font-weight:400;letter-spacing:0.263px;">Фильтр</span>
<span class="t" id="t45" style="left:788px;top:471.00px;font-size:13px;color:#555;font-weight:400;letter-spacing:-0.375px;">(25)</span>
<span class="t" id="t46" style="left:864px;top:471.00px;font-size:13px;color:#555;font-weight:400;letter-spacing:-0.375px;">(36)</span>
<span class="t" id="t47" style="left:954px;top:470.57px;font-size:13.5px;color:#444;font-weight:400;letter-spacing:-0.295px;">Все ПС</span>
<span class="t" id="t48" style="left:188px;top:535.76px;font-size:18px;color:#333;font-weight:400;letter-spacing:-0.189px;">Яндекс Россия Россия</span>
<span class="t" id="t49" style="left:859px;top:535.65px;font-size:14px;color:#444;font-weight:400;letter-spacing:0.263px;">Колонки</span>
<span class="t" id="t50" style="left:951px;top:536.65px;font-size:14px;color:#aab7c4;font-weight:400;letter-spacing:0.298px;">Поиск</span>
<span class="t" id="t51" style="left:956px;top:561.15px;font-size:14px;color:#fff;font-weight:700;letter-spacing:0.027px;">29 %</span>
<span class="t" id="t52" style="left:202px;top:587.15px;font-size:14px;color:#777;font-weight:400;letter-spacing:-0.080px;">Запрос</span>
<span class="t" id="t53" style="left:509px;top:588.00px;font-size:13px;color:#777;font-weight:400;letter-spacing:-0.509px;">URL</span>
<span class="t" id="t54" style="left:579px;top:587.15px;font-size:14px;color:#777;font-weight:400;letter-spacing:-0.349px;">Частотность</span>
<span class="t" id="t55" style="left:240px;top:621.65px;font-size:14px;color:#555;font-weight:400;letter-spacing:-0.202px;">Общая</span>
<span class="t" id="t56" style="left:240px;top:656.65px;font-size:14px;color:#555;font-weight:400;letter-spacing:0.037px;">Финансы</span>
<span class="t" id="t57" style="left:240px;top:691.65px;font-size:14px;color:#555;font-weight:400;letter-spacing:0.002px;">Политика</span>
<span class="t" id="t58" style="left:181px;top:742.65px;font-size:14px;color:#555;font-weight:400;letter-spacing:0.000px;">-</span>
<span class="t" id="t59" style="left:194px;top:742.65px;font-size:14px;color:#555;font-weight:400;letter-spacing:-0.138px;">Запрос попал в ТОП 10</span>
<span class="t" id="t60" style="left:393px;top:742.65px;font-size:14px;color:#555;font-weight:400;letter-spacing:0.000px;">-</span>
<span class="t" id="t61" style="left:407px;top:742.65px;font-size:14px;color:#555;font-weight:400;letter-spacing:-0.175px;">Запрос выпал из ТОП 10</span>
<span class="t" id="t62" style="left:614px;top:742.65px;font-size:14px;color:#555;font-weight:400;letter-spacing:0.000px;">-</span>
<span class="t" id="t63" style="left:628px;top:742.65px;font-size:14px;color:#555;font-weight:400;letter-spacing:-0.212px;">Запрос в ТОП 10</span>
<span class="t" id="t64" style="left:784px;top:742.65px;font-size:14px;color:#555;font-weight:400;letter-spacing:0.000px;">-</span>
<span class="t" id="t65" style="left:799px;top:742.65px;font-size:14px;color:#555;font-weight:400;letter-spacing:-0.282px;">Появился в ТОП 100</span>
<span class="t" id="t66" style="left:194px;top:799.65px;font-size:14px;color:#444;font-weight:400;letter-spacing:-0.015px;">Средняя позиция</span>
<span class="t" id="t67" style="left:966px;top:799.65px;font-size:14px;color:#444;font-weight:400;letter-spacing:-0.250px;">Выбор</span>
<span class="t" id="t68" style="left:172px;top:832.34px;font-size:12px;color:#444;font-weight:400;letter-spacing:0.641px;">47</span>
<span class="t" id="t69" style="left:172px;top:915.34px;font-size:12px;color:#444;font-weight:400;letter-spacing:0.641px;">48</span>
<span class="t" id="t70" style="left:172px;top:998.34px;font-size:12px;color:#444;font-weight:400;letter-spacing:0.641px;">49</span>
<span class="t" id="t71" style="left:917px;top:969.00px;font-size:13px;color:#333;font-weight:400;letter-spacing:-0.276px;">Яндекс Россия Россия – Ср.</span>
</body></html>
